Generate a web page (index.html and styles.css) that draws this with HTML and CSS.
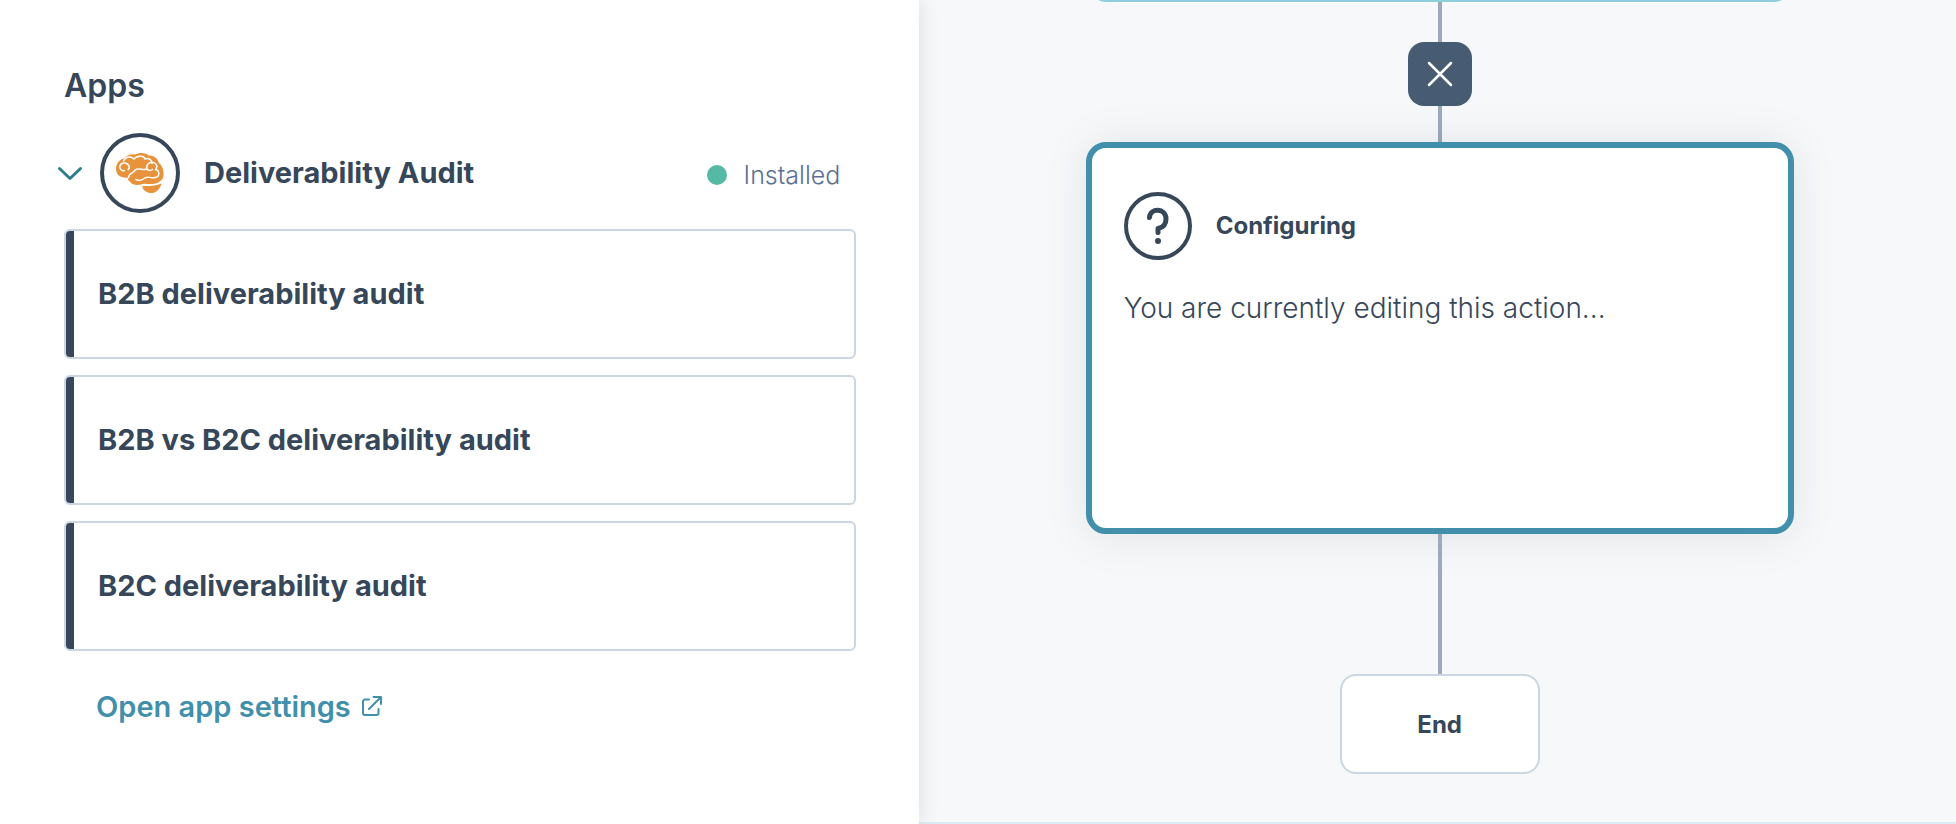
FILE: index.html
```html
<!DOCTYPE html>
<html lang="en">
<head>
  <meta charset="UTF-8" />
  <title>Workflow editor</title>
  <link rel="stylesheet" href="styles.css">
</head>
<body>
  <aside class="panel">
    <h2 class="panel-title">Apps</h2>
    <div class="app-header">
      <button class="toggle" aria-label="Collapse Deliverability Audit" aria-expanded="true">
        <svg width="26" height="16" viewBox="0 0 26 16" fill="none" stroke="currentColor" stroke-width="3" stroke-linecap="round" stroke-linejoin="round"><path d="M2.5 3.5 13 13.5 23.5 3.5"/></svg>
      </button>
      <span class="app-icon">
        <svg width="52" height="44" viewBox="0 0 52 44">
          <g fill="#e8923c">
            <path d="M2.500 21C.5 14 5 8.500 10 7.500C13 3.500 18 2.500 21 3.500C25 1 32 1.500 35 4.500C40 4 44 8 45 12C49 15 50.500 22 49 27C46 32 41 33 37 33C33 33 30 32 27 33.500C22 34.500 17 33.500 16 30.500C13.500 29.500 14 27.500 14.500 26.500C9 27.500 3.500 25 2.500 21Z"/>
            <path d="M28 35.500C32 34 38 36.500 47.500 32.500C46 39 41 42.500 36 42C32 41.500 29.500 39.500 28 35.500Z"/>
          </g>
          <g fill="none" stroke="#fff" stroke-width="1.500" stroke-linecap="round" stroke-linejoin="round">
            <path d="M10.500 19.500C7.500 20.500 5 17.500 6 14.500C7.500 11 13.500 11 15 15C15.500 16.500 15 18 14 18.500"/>
            <path d="M9.500 10C12 5 17 5 20 8C22 5 30 3.500 31 8C35 6.500 38 9 38 12.500"/>
            <path d="M14.500 26.500C15 21.500 20 22.500 21 19C25 16 29 20 33 18C31 11 41 8.500 43 15.500C42.500 17 42 18 41.500 18.500C46 19.500 46 26 41 26.500C36 28 34 24 30 27.500C27.500 29.500 24.500 30 22 28.500"/>
            <path d="M33 18C34 19.500 36.500 20 38.500 18.500"/>
          </g>
        </svg>
      </span>
      <h3 class="app-name">Deliverability Audit</h3>
      <span class="status">Installed</span>
    </div>

    <div class="action-list">
      <button class="action">B2B deliverability audit</button>
      <button class="action">B2B vs B2C deliverability audit</button>
      <button class="action">B2C deliverability audit</button>
    </div>

    <a class="settings-link" href="#">
      Open app settings
      <svg width="22" height="22" viewBox="0 0 22 22" fill="none" stroke="currentColor" stroke-width="2" stroke-linecap="round" stroke-linejoin="round"><path d="M8 3.500H4A2 2 0 0 0 2 5.500V17A2 2 0 0 0 4 19H15.500A2 2 0 0 0 17.500 17V13M12.500 1H20V8M20 1 8 13"/></svg>
    </a>
  </aside>

  <main class="canvas">
    <div class="node node-previous"></div>
    <div class="line line-top"></div>
    <button class="cancel" aria-label="Cancel">
      <svg width="28" height="28" viewBox="0 0 28 28" fill="none" stroke="currentColor" stroke-width="2.500" stroke-linecap="round"><path d="M3 3 25 25M25 3 3 25"/></svg>
    </button>
    <div class="line line-middle"></div>
    <section class="node node-active">
      <div class="node-header">
        <span class="node-icon">
          <svg width="24" height="38" viewBox="0 0 24 38" fill="none" stroke="currentColor" stroke-width="5" stroke-linecap="round" stroke-linejoin="round"><path d="M3.500 10.500C4 .5 20 .5 20 12C20 17.500 17 20.500 12 21.500V25.500"/><circle cx="12" cy="34" r="3" fill="currentColor" stroke="none"/></svg>
        </span>
        <h3 class="node-title">Configuring</h3>
      </div>
      <p class="node-text">You are currently editing this action...</p>
    </section>
    <div class="line line-bottom"></div>
    <div class="node-end">End</div>
  </main>
</body>
</html>
```

FILE: styles.css
```css
:root {
  --text: #37475a; --text-muted: #5b7093;
  --link: #428fab; --border: #cbd6e2;
  --line: #9baabf; --canvas: #f6f8fa;
}
* { box-sizing: border-box; }
body {
  margin: 0; min-height: 100vh;
  display: flex;
  font-family: Inter, "Liberation Sans", sans-serif;
  color: var(--text);
}
h2, h3, p { margin: 0; }
button { font: inherit; color: inherit; cursor: pointer; }
svg { display: block; flex: none; }

.panel {
  flex: 0 0 47%;
  padding: 66px 63px 0 64px;
  background: #fff;
  box-shadow: 0 0 20px rgba(0,0,0,0.12);
  z-index: 1;
}
.panel-title {
  font-size: 32px; line-height: 40px; font-weight: 600;
}
.app-header {
  display: flex; align-items: center;
  margin: 27px 16px 16px -7px;
}
.toggle {
  margin-right: 17px; padding: 0;
  border: none; background: none; color: #2e7d8c;
}
.app-icon, .node-icon {
  display: flex; align-items: center; justify-content: center;
  border: 4px solid var(--text); border-radius: 50%;
}
.app-icon { width: 80px; height: 80px; }
.app-name {
  margin-left: 24px;
  font-size: 29px; line-height: 36px; font-weight: 700;
}
.status {
  display: flex; align-items: center; gap: 17px;
  margin-left: auto; padding-top: 4px;
  font-size: 25px; line-height: 36px; font-weight: 350;
  color: var(--text-muted);
}
.status::before {
  content: ""; width: 20px; height: 20px;
  border-radius: 50%; background: #56b9a5;
}

.action-list { display: grid; gap: 16px; }
.action {
  height: 130px; padding: 0 24px 0 0;
  display: flex; align-items: center; gap: 24px;
  border: 2px solid var(--border); border-radius: 6px;
  background: #fff; overflow: hidden;
  font-size: 29px; line-height: 36px; font-weight: 700;
}
.action::before {
  content: ""; width: 8px; height: 100%;
  background: var(--text);
}
.settings-link {
  display: flex; align-items: center; gap: 10px;
  margin: 38px 32px 0;
  font-size: 29px; line-height: 36px; font-weight: 600;
  color: var(--link); text-decoration: none;
}

.canvas {
  flex: 1;
  display: flex; flex-direction: column; align-items: center;
  padding-left: 4px; overflow: hidden;
  background: var(--canvas);
  border-bottom: 2px solid #dcebf0;
}
.node {
  width: 708px; max-width: 100%; flex: none;
  border-radius: 20px; background: #fff;
}
.node-previous {
  width: 700px; height: 40px; margin-top: -38px;
  border: 2px solid #8fcfdd; border-radius: 16px;
}
.line { width: 4px; background: var(--line); }
.line-top { height: 40px; }
.line-middle { height: 36px; }
.line-bottom { height: 140px; }
.cancel {
  width: 64px; height: 64px; padding: 0;
  display: flex; align-items: center; justify-content: center;
  border: none; border-radius: 16px;
  background: #475b73; color: #fff;
}
.node-active {
  min-height: 392px; padding: 44px 32px;
  border: 6px solid var(--link);
  box-shadow: 0 2px 48px rgba(0,0,0,0.09);
}
.node-header { display: flex; align-items: center; gap: 24px; }
.node-icon { width: 68px; height: 68px; }
.node-title { font-size: 24px; line-height: 36px; font-weight: 700; }
.node-text {
  margin-top: 30px;
  font-size: 28px; line-height: 36px; font-weight: 350;
}
.node-end {
  width: 200px; height: 100px;
  display: flex; align-items: center; justify-content: center;
  border: 2px solid var(--border); border-radius: 16px;
  background: #fff;
  font-size: 24px; font-weight: 700;
}
```
